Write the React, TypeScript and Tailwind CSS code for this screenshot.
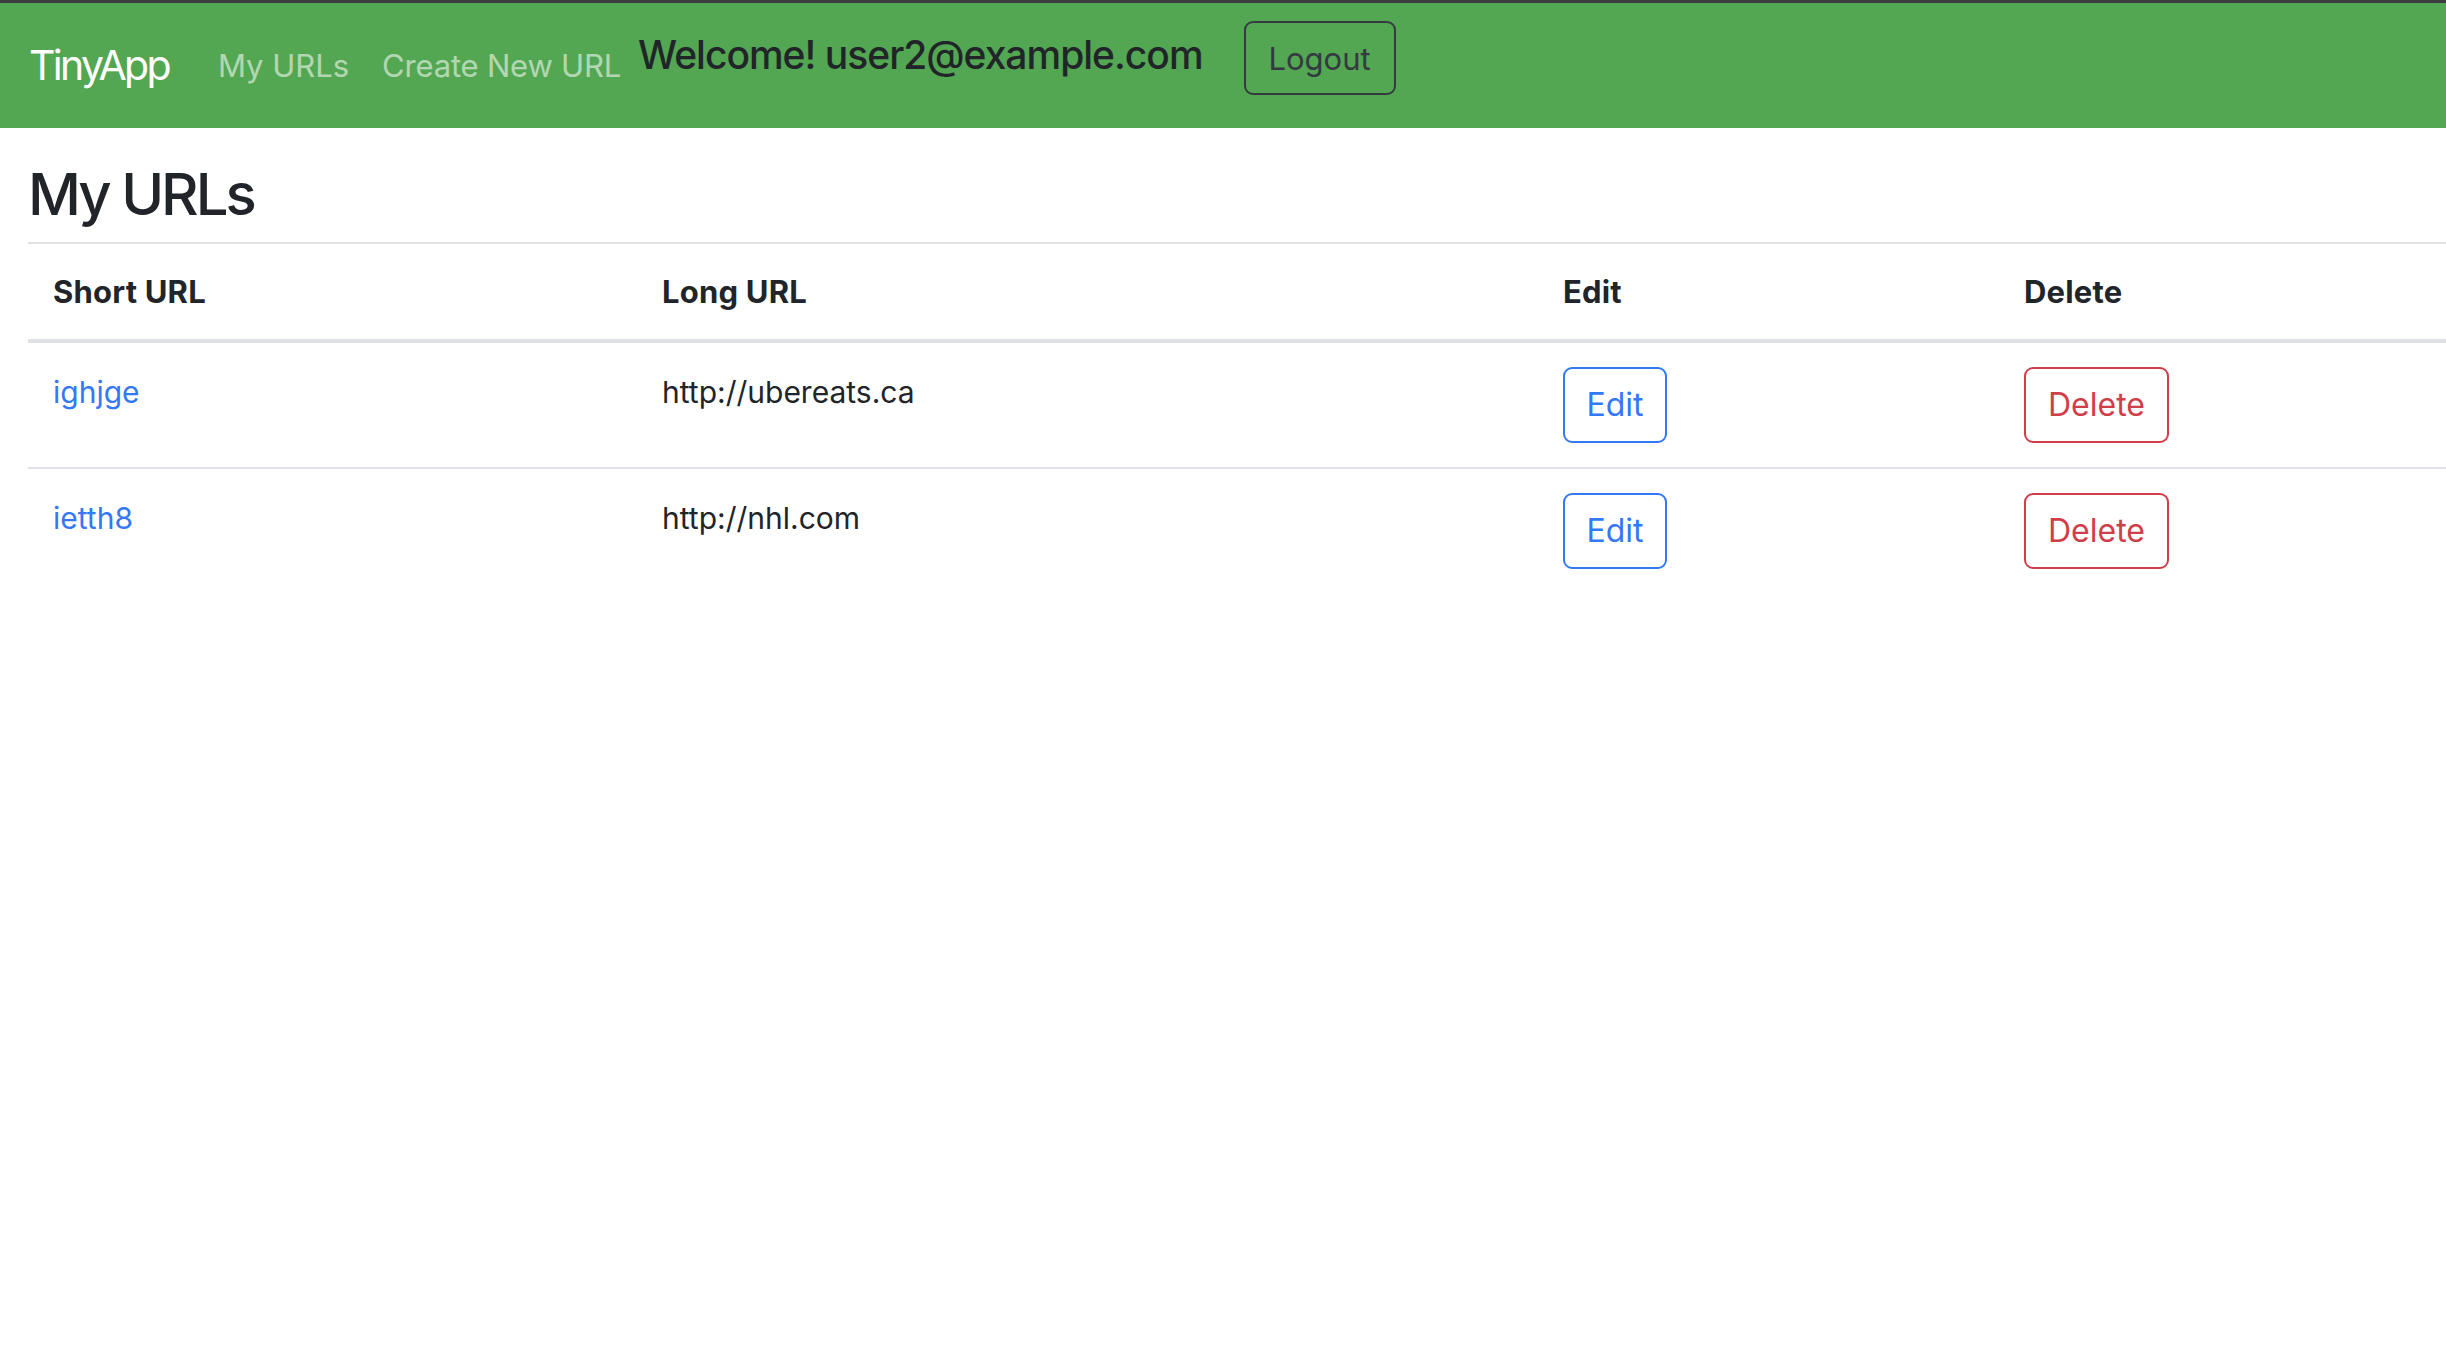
import React from 'react';

type UrlRow = { short: string; long: string };

const urls: UrlRow[] = [
  { short: 'ighjge', long: 'http://ubereats.ca' },
  { short: 'ietth8', long: 'http://nhl.com' },
];

function Navbar() {
  return (
    <nav className="h-[128px] bg-[#53a652] border-t-[3px] border-[#3c3d40] flex items-start pl-[29px]">
      <a className="mt-[42px] text-[41px] leading-none text-white tracking-[-2.7px]">TinyApp</a>
      <a className="ml-[49px] mt-[47px] text-[31px] leading-none text-white/55">My URLs</a>
      <a className="ml-[33px] mt-[47px] text-[31px] leading-none tracking-[-0.2px] text-white/55">Create New URL</a>
      <h5 className="ml-[17px] mt-[32px] text-[39px] leading-none font-medium tracking-[-1px] text-[#212529]">
        Welcome! user2@example.com
      </h5>
      <button className="ml-[41px] mt-[18px] h-[74px] w-[152px] border-2 border-[#343a40] rounded-[9px] text-[31px] leading-none text-[#343a40]">
        Logout
      </button>
    </nav>
  );
}

function UrlTable() {
  return (
    <table className="w-full border-collapse border-t-2 border-[#dee2e6] text-[#212529]">
      <colgroup>
        <col className="w-[609px]" />
        <col className="w-[901px]" />
        <col className="w-[461px]" />
        <col />
      </colgroup>
      <thead>
        <tr className="border-b-4 border-[#dee2e6]">
          <th className="px-[25px] py-[24px] text-left text-[31px] leading-[47px] font-bold tracking-[0.2px]">Short URL</th>
          <th className="px-[25px] py-[24px] text-left text-[31px] leading-[47px] font-bold tracking-[0.2px]">Long URL</th>
          <th className="px-[25px] py-[24px] text-left text-[31px] leading-[47px] font-bold tracking-[0.2px]">Edit</th>
          <th className="px-[25px] py-[24px] text-left text-[31px] leading-[47px] font-bold tracking-[0.2px]">Delete</th>
        </tr>
      </thead>
      <tbody>
        {urls.map((u, i) => (
          <tr key={u.short} className={i < urls.length - 1 ? 'border-b-2 border-[#dee2e6]' : ''}>
            <td className="px-[25px] py-[24px] align-top text-[30px] leading-[50px]">
              <a className="text-[#3478f6]">{u.short}</a>
            </td>
            <td className="px-[25px] py-[24px] align-top text-[30px] leading-[50px]">{u.long}</td>
            <td className="px-[25px] py-[24px] align-top">
              <button className="h-[76px] w-[104px] border-2 border-[#3478f6] rounded-[9px] text-[32px] leading-none text-[#3478f6]">
                Edit
              </button>
            </td>
            <td className="px-[25px] py-[24px] align-top">
              <button className="h-[76px] w-[145px] border-2 border-[#d03e4a] rounded-[9px] text-[32px] leading-none text-[#d03e4a]">
                Delete
              </button>
            </td>
          </tr>
        ))}
      </tbody>
    </table>
  );
}

export default function App() {
  return (
    <div className="min-h-screen bg-white font-['Inter',sans-serif]">
      <Navbar />
      <main className="pl-[28px]">
        <h1 className="mt-[37px] mb-[19px] text-[58px] leading-none font-medium tracking-[-3px] text-[#212529]">My URLs</h1>
        <UrlTable />
      </main>
    </div>
  );
}
